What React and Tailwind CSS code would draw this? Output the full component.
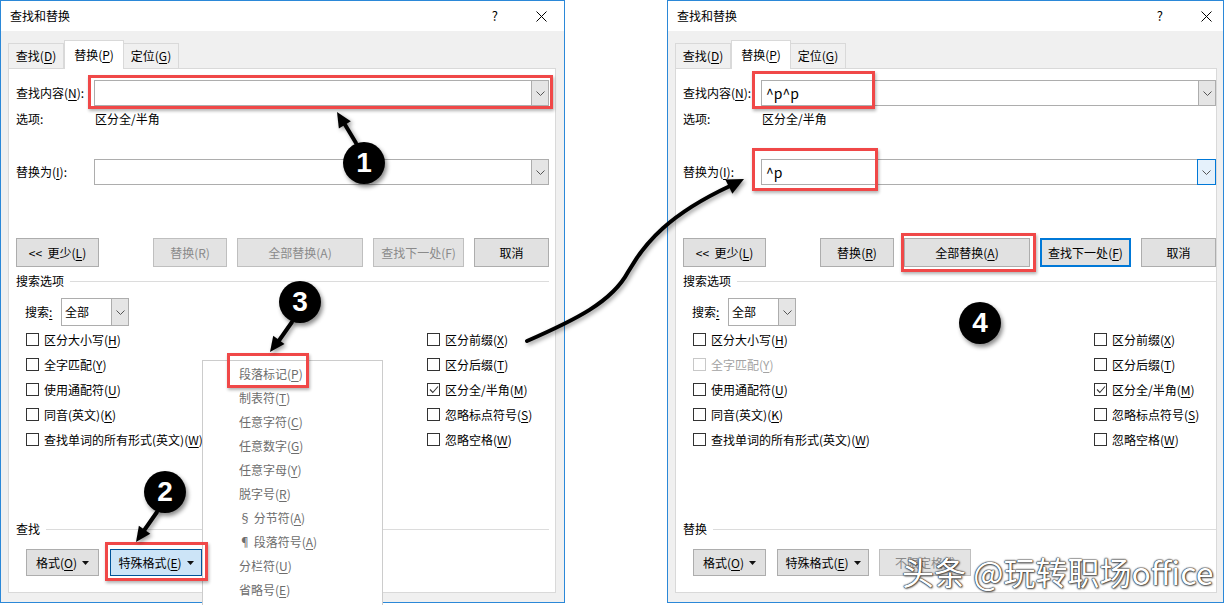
const FONT = "font-['Noto_Sans_CJK_SC','Noto_Sans',sans-serif]";

function Acc({ t, k, s = '' }) {
  return (
    <>
      {t}(<span className="underline underline-offset-[2px]">{k}</span>){s}
    </>
  );
}

function Chevron() {
  return (
    <svg width="9" height="5" viewBox="0 0 9 5" className="block">
      <polyline points="0.5,0.5 4.5,4.5 8.5,0.5" fill="none" stroke="#555" strokeWidth="1" />
    </svg>
  );
}

function Caret() {
  return (
    <svg width="7" height="4" viewBox="0 0 7 4" className="ml-[5px] block">
      <polygon points="0,0 7,0 3.5,4" fill="#111" />
    </svg>
  );
}

function Combo({ width, value, active }) {
  return (
    <div className={`flex h-[26px] border border-[#adadad] bg-white ${width}`}>
      <div className="flex flex-1 items-center pl-[4px] text-[14px] text-black">{value}</div>
      {active ? (
        <div className="-my-px -mr-px flex w-[19px] items-center justify-center border border-[#0078d7] bg-[#e5f1fb]">
          <Chevron />
        </div>
      ) : (
        <div className="flex w-[17px] items-center justify-center border-l border-[#adadad] bg-[#e5e5e5]">
          <Chevron />
        </div>
      )}
    </div>
  );
}

function Btn({ w, children, disabled, variant, className = '' }) {
  let look = 'border border-[#adadad] bg-[#e1e1e1] text-black';
  if (disabled) look = 'border border-[#bfbfbf] bg-[#e3e3e3] text-[#8a8a8a]';
  if (variant === 'default') look = 'border-2 border-[#0078d7] bg-[#e1e1e1] text-black';
  if (variant === 'pressed') look = 'border border-[#005499] bg-[#cce4f7] text-black';
  return (
    <div className={`flex h-full items-center justify-center text-[12px] ${look} ${w} ${className}`}>
      {children}
    </div>
  );
}

function Check({ label, checked, disabled }) {
  return (
    <div className="flex h-[25px] items-center">
      <span
        className={`flex h-[13px] w-[13px] items-center justify-center border bg-white ${
          disabled ? 'border-[#c8c8c8]' : 'border-[#333333]'
        }`}
      >
        {checked && (
          <svg width="10" height="9" viewBox="0 0 10 9">
            <polyline points="1,4.5 3.8,7.5 9,1.5" fill="none" stroke="#333" strokeWidth="1.1" />
          </svg>
        )}
      </span>
      <span className={`ml-[5px] ${disabled ? 'text-[#a3a3a3]' : 'text-black'}`}>{label}</span>
    </div>
  );
}

function Dialog({ filled, width, panelWidth, closeMr }) {
  return (
    <div className={`flex h-[603px] shrink-0 flex-col border border-[#2b88d8] bg-[#f0f0f0] ${width}`}>
      {/* title bar */}
      <div className="flex h-[30px] items-center bg-white pl-[9px] text-[12px] text-black">
        <span>查找和替换</span>
        <span className="ml-auto text-[13px]">?</span>
        <svg width="11" height="11" viewBox="0 0 11 11" className={`ml-[38px] ${closeMr}`}>
          <path d="M0.5 0.5 L10.5 10.5 M10.5 0.5 L0.5 10.5" stroke="#000" strokeWidth="1" />
        </svg>
      </div>

      {/* tabs */}
      <div className="flex h-[37px] items-end pl-[7px] text-[12px] text-black">
        <div className="flex h-[25px] w-[56px] items-center justify-center border border-b-0 border-[#d9d9d9] bg-[#f0f0f0]">
          <Acc t="查找" k="D" />
        </div>
        <div className="relative z-10 -mb-px flex h-[29px] w-[60px] items-center justify-center border border-b-0 border-[#d9d9d9] bg-white">
          <Acc t="替换" k="P" />
        </div>
        <div className="flex h-[25px] w-[55px] items-center justify-center border border-b-0 border-l-0 border-[#d9d9d9] bg-[#f0f0f0]">
          <Acc t="定位" k="G" />
        </div>
      </div>

      {/* panel */}
      <div className={`ml-[7px] flex h-[525px] flex-col border border-[#d9d9d9] bg-white pl-[7px] text-[12px] text-black ${panelWidth}`}>
        <div className="mt-[11px] flex h-[26px] items-center">
          <span className="w-[78px]">
            <Acc t="查找内容" k="N" s=":" />
          </span>
          <Combo width="w-[455px]" value={filled ? '^p^p' : ''} />
        </div>
        <div className="mt-[2px] flex h-[22px] items-center">
          <span className="w-[79px]">选项:</span>
          <span>区分全/半角</span>
        </div>
        <div className="mt-[29px] flex h-[26px] items-center">
          <span className="w-[78px]">
            <Acc t="替换为" k="I" s=":" />
          </span>
          <Combo width="w-[455px]" value={filled ? '^p' : ''} active={filled} />
        </div>

        <div className="mt-[53px] flex h-[29px]">
          <Btn w="w-[83px]">
            {'<< '}&nbsp;<Acc t="更少" k="L" />
          </Btn>
          <Btn w="w-[74px]" className="ml-[54px]" disabled={!filled}>
            {filled ? <Acc t="替换" k="R" /> : '替换(R)'}
          </Btn>
          <Btn w="w-[126px]" className="ml-[10px]" disabled={!filled}>
            {filled ? <Acc t="全部替换" k="A" /> : '全部替换(A)'}
          </Btn>
          <Btn w="w-[91px]" className="ml-[10px]" disabled={!filled} variant={filled ? 'default' : undefined}>
            {filled ? <Acc t="查找下一处" k="F" /> : '查找下一处(F)'}
          </Btn>
          <Btn w="w-[75px]" className="ml-[10px]">
            取消
          </Btn>
        </div>

        <div className="mt-[5px] flex h-[18px] w-[533px] items-center">
          <span>搜索选项</span>
          <span className="ml-[6px] h-px flex-1 bg-[#dcdcdc]" />
        </div>

        <div className="mt-[8px] flex h-[28px] items-center pl-[9px]">
          <span className="w-[36px]">
            搜索<span className="underline underline-offset-[2px]">:</span>
          </span>
          <div className="flex h-[28px] w-[68px] border border-[#adadad] bg-white">
            <div className="flex flex-1 items-center pl-[3px]">全部</div>
            <div className="flex w-[17px] items-center justify-center border-l border-[#adadad] bg-[#e5e5e5]">
              <Chevron />
            </div>
          </div>
        </div>

        <div className="mt-[1px] flex pl-[10px]">
          <div className="w-[401px]">
            <Check label={<Acc t="区分大小写" k="H" />} />
            <Check label={<Acc t="全字匹配" k="Y" />} disabled={filled} />
            <Check label={<Acc t="使用通配符" k="U" />} />
            <Check label={<Acc t="同音(英文)" k="K" />} />
            <Check label={<Acc t="查找单词的所有形式(英文)" k="W" />} />
          </div>
          <div>
            <Check label={<Acc t="区分前缀" k="X" />} />
            <Check label={<Acc t="区分后缀" k="T" />} />
            <Check label={<Acc t="区分全/半角" k="M" />} checked />
            <Check label={<Acc t="忽略标点符号" k="S" />} />
            <Check label={<Acc t="忽略空格" k="W" />} />
          </div>
        </div>

        <div className="mt-[68px] flex h-[18px] w-[533px] items-center">
          <span>{filled ? '替换' : '查找'}</span>
          <span className="ml-[6px] h-px flex-1 bg-[#dcdcdc]" />
        </div>

        <div className="mt-[11px] flex h-[27px] pl-[10px]">
          <Btn w="w-[73px]">
            <Acc t="格式" k="O" />
            <Caret />
          </Btn>
          <Btn w="w-[92px]" className="ml-[11px]" variant={filled ? undefined : 'pressed'}>
            <Acc t="特殊格式" k="E" />
            <Caret />
          </Btn>
          {filled && (
            <Btn w="w-[92px]" className="ml-[10px]" disabled>
              不限定格式
            </Btn>
          )}
        </div>
      </div>
    </div>
  );
}

function Badge({ n, pos }) {
  return (
    <div
      className={`absolute z-30 flex h-[42px] w-[42px] items-center justify-center rounded-full bg-black font-['Liberation_Sans',sans-serif] text-[28px] font-bold text-white shadow-[2px_3px_4px_rgba(0,0,0,0.45)] ${pos}`}
    >
      {n}
    </div>
  );
}

function RedBox({ pos }) {
  return <div className={`absolute z-20 border-[3px] border-[#f04848] shadow-[1px_2px_3px_rgba(0,0,0,0.3)] ${pos}`} />;
}

function head(x1, y1, x2, y2, len = 14, half = 7) {
  const dx = x2 - x1;
  const dy = y2 - y1;
  const d = Math.hypot(dx, dy);
  const ux = dx / d;
  const uy = dy / d;
  const bx = x2 - ux * len;
  const by = y2 - uy * len;
  return `${x2},${y2} ${bx - uy * half},${by + ux * half} ${bx + uy * half},${by - ux * half}`;
}

const menuItems = [
  ['段落标记', 'P'],
  ['制表符', 'T'],
  ['任意字符', 'C'],
  ['任意数字', 'G'],
  ['任意字母', 'Y'],
  ['脱字号', 'R'],
  ['§ 分节符', 'A'],
  ['¶ 段落符号', 'A'],
  ['分栏符', 'U'],
  ['省略号', 'E'],
];

export default function App() {
  return (
    <div className={`relative flex h-[605px] w-[1232px] overflow-hidden bg-white ${FONT}`}>
      <Dialog width="w-[565px]" panelWidth="w-[548px]" closeMr="mr-[17px]" />
      <div className="ml-[102px]">
        <Dialog filled width="w-[557px]" panelWidth="w-[542px]" closeMr="mr-[11px]" />
      </div>

      {/* special format dropdown menu */}
      <div className="absolute left-[202px] top-[360px] z-10 h-[250px] w-[181px] border border-[#cccccc] bg-white pt-[1px] text-[12px] text-[#6d6d6d]">
        {menuItems.map(([t, k], i) => (
          <div key={i} className="flex h-[24px] items-center pl-[36px]">
            <Acc t={t} k={k} />
          </div>
        ))}
      </div>

      <RedBox pos="left-[88px] top-[75px] w-[465px] h-[34px]" />
      <RedBox pos="left-[227px] top-[353px] w-[82px] h-[35px]" />
      <RedBox pos="left-[105px] top-[542px] w-[103px] h-[39px]" />
      <RedBox pos="left-[752px] top-[71px] w-[123px] h-[38px]" />
      <RedBox pos="left-[752px] top-[148px] w-[126px] h-[43px]" />
      <RedBox pos="left-[901px] top-[233px] w-[135px] h-[39px]" />

      <svg
        width="1232"
        height="605"
        viewBox="0 0 1232 605"
        className="pointer-events-none absolute left-0 top-0 z-20 drop-shadow-[2px_2px_2px_rgba(0,0,0,0.4)]"
      >
        <g stroke="#000" strokeWidth="4" strokeLinecap="round" fill="none">
          <line x1="356" y1="143" x2="344" y2="123" />
          <line x1="292" y1="322" x2="278" y2="342" />
          <line x1="157" y1="512" x2="143" y2="532" />
          <path d="M527 341 C 575 320, 612 302, 628 272 C 645 242, 670 214, 730 186" />
        </g>
        <g fill="#000">
          <polygon points={head(356, 143, 337, 112, 15, 7)} />
          <polygon points={head(292, 322, 270, 352, 15, 7)} />
          <polygon points={head(157, 512, 136, 542, 15, 7)} />
          <polygon points={head(722, 190, 744, 179, 17, 8)} />
        </g>
      </svg>

      <Badge n="1" pos="left-[343px] top-[142px]" />
      <Badge n="2" pos="left-[144px] top-[471px]" />
      <Badge n="3" pos="left-[279px] top-[281px]" />
      <Badge n="4" pos="left-[959px] top-[302px]" />

      <div className="absolute left-[902px] top-[551px] z-30 text-[32px] leading-[40px] text-white [text-shadow:0_0_1px_#222,0_0_1px_#222,0_0_2px_#333,1px_1px_2px_rgba(0,0,0,0.6)]">
        头条 @玩转职场office
      </div>
    </div>
  );
}
